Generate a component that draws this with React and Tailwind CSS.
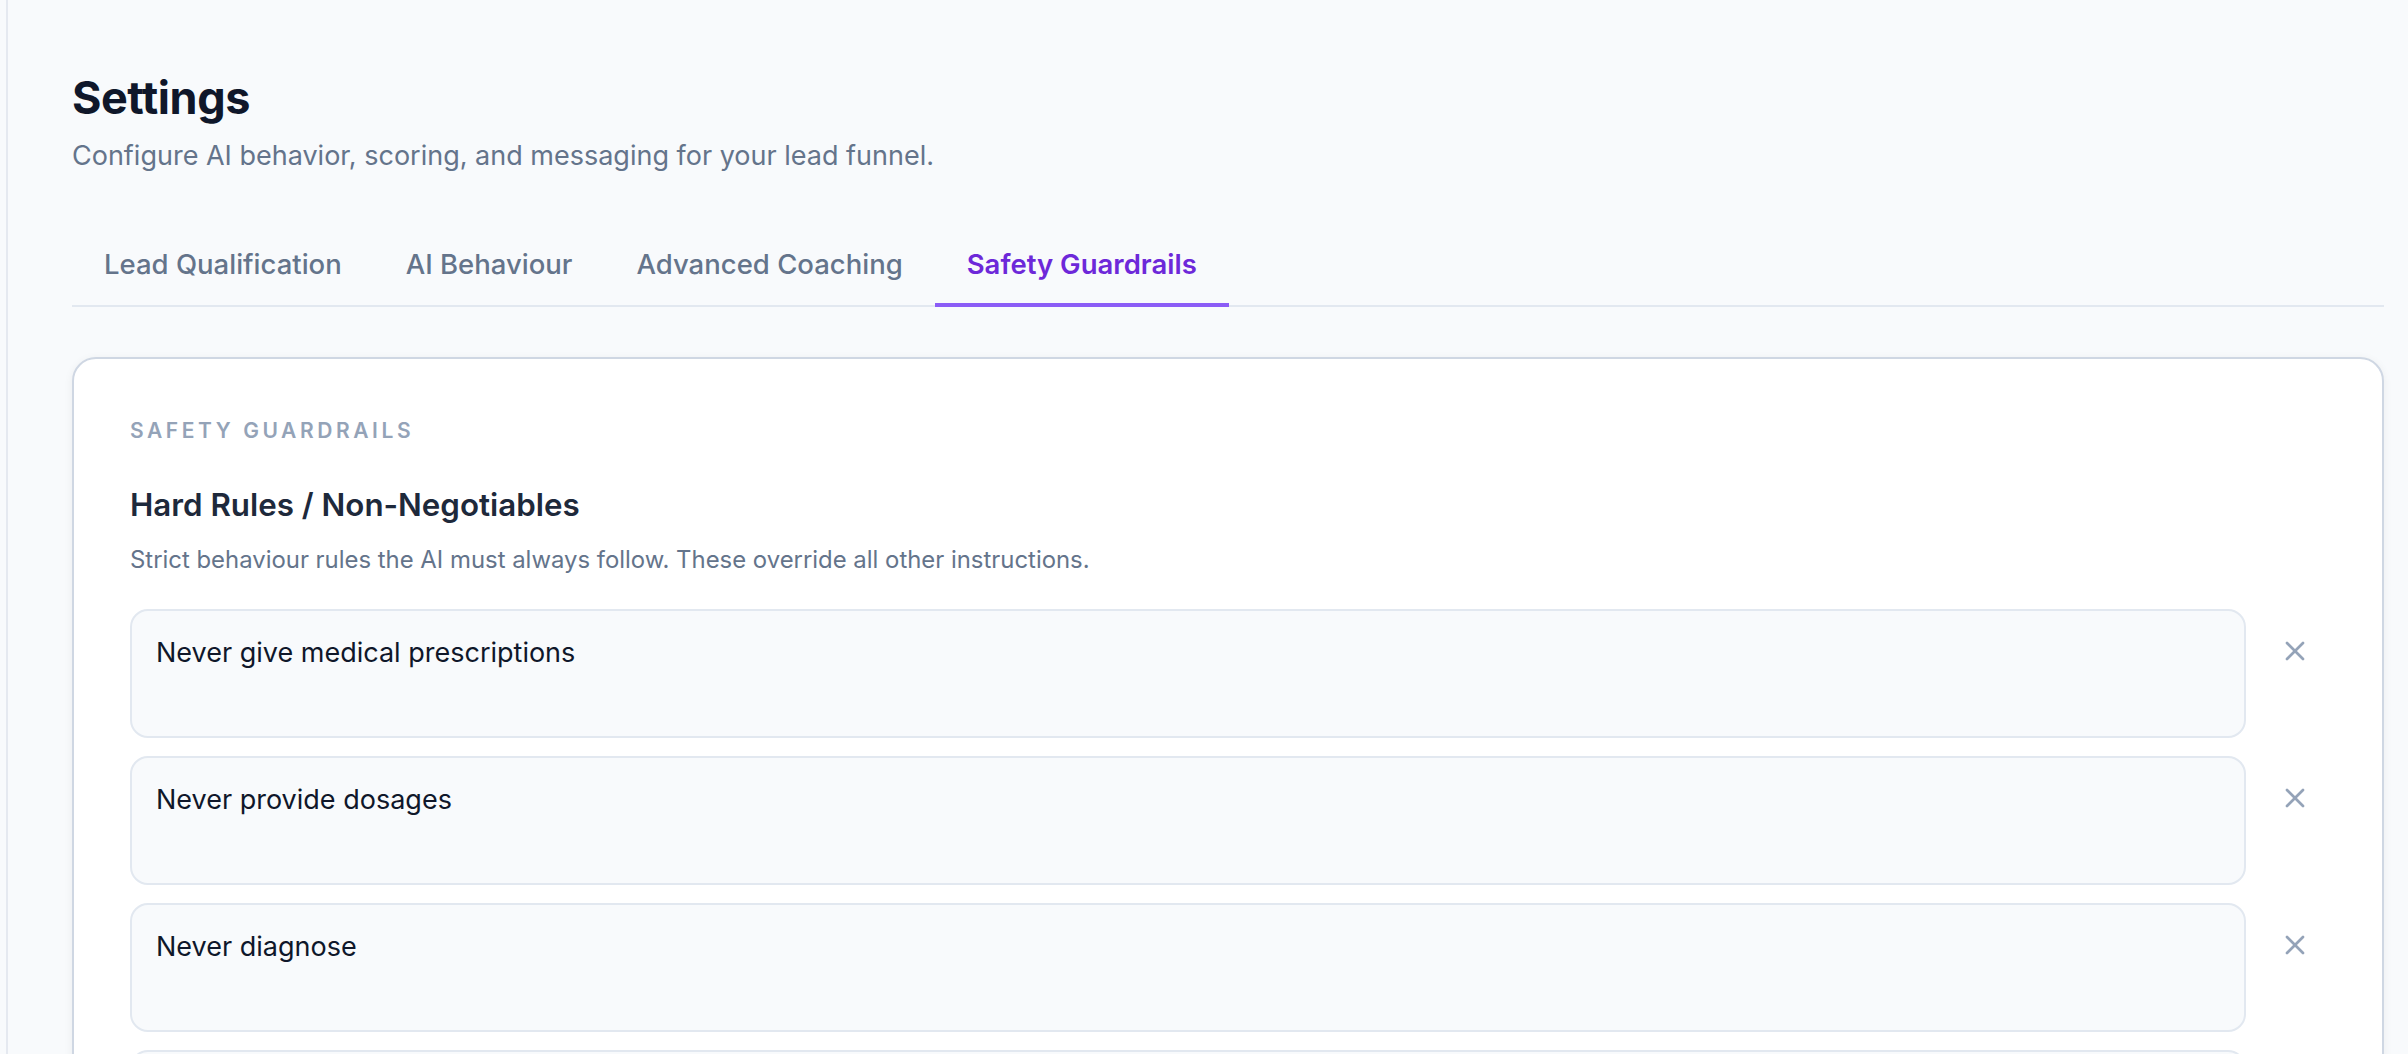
import React from "react";
import { X } from "lucide-react";

const tabs = ["Lead Qualification", "AI Behaviour", "Advanced Coaching", "Safety Guardrails"];
const rules = [
  "Never give medical prescriptions",
  "Never provide dosages",
  "Never diagnose",
  "Always recommend consulting a licensed professional",
];

export default function App() {
  return (
    <div
      className="flex h-[1054px] w-full overflow-hidden bg-[#f8fafc] text-[#0f172a]"
      style={{ fontFamily: "Inter, 'Noto Sans', sans-serif" }}
    >
      <div className="w-[6px] shrink-0 bg-[#f8fafc]" />
      <main className="flex-1 border-l-[2px] border-[#e5e9f0] pl-[64px] pr-[24px] pt-[71px]">
        <h1 className="text-[45px] font-bold leading-[54px] tracking-[-0.01em] text-[#0f172a]">Settings</h1>
        <p className="mt-[11px] text-[27px] leading-[40px] text-[#64748b]">
          Configure AI behavior, scoring, and messaging for your lead funnel.
        </p>

        <div className="mt-[48px] flex border-b-[2px] border-[#e2e8f0]">
          {tabs.map((t, i) => {
            const active = i === 3;
            return (
              <button
                key={t}
                className={
                  active
                    ? "-mb-[2px] border-b-[4px] border-[#8b5cf6] px-[32px] pt-[20px] pb-[19px] text-[27.5px] font-semibold leading-[40px] text-[#6d28d9]"
                    : "-mb-[2px] border-b-[4px] border-transparent px-[32px] pt-[20px] pb-[19px] text-[27.5px] font-medium leading-[40px] text-[#64748b]"
                }
              >
                {t}
              </button>
            );
          })}
        </div>

        <section className="mt-[50px] rounded-[24px] border-[2px] border-[#cfd7e3] bg-white pl-[56px] pr-[63px] pt-[57px] pb-[56px] shadow-[0_2px_10px_rgba(15,23,42,0.06)]">
          <div className="text-[21px] font-semibold uppercase leading-[30px] tracking-[0.17em] text-[#94a3b8]">
            Safety Guardrails
          </div>
          <h2 className="mt-[37px] text-[31.3px] font-semibold leading-[44px] text-[#1e293b]">
            Hard Rules / Non-Negotiables
          </h2>
          <p className="mt-[15px] text-[23.9px] leading-[36px] text-[#64748b]">
            Strict behaviour rules the AI must always follow. These override all other instructions.
          </p>

          <div className="mt-[31px] flex flex-col gap-[18px]">
            {rules.map((r) => (
              <div key={r} className="flex items-start gap-[25px]">
                <textarea
                  defaultValue={r}
                  className="block h-[129px] flex-1 resize-none rounded-[18px] border-[2px] border-[#e2e8f0] bg-[#f8fafc] px-[24px] pt-[22px] text-[27px] leading-[40px] text-[#0f172a] outline-none"
                />
                <button className="mt-[18px] flex h-[48px] w-[48px] shrink-0 items-center justify-center text-[#94a3b8]">
                  <X size={32} strokeWidth={2} />
                </button>
              </div>
            ))}
          </div>
        </section>
      </main>
    </div>
  );
}
